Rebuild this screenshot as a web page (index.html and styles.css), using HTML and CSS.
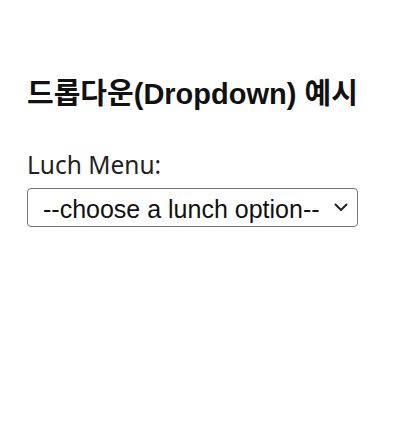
FILE: index.html
```html
<!DOCTYPE html>
<html lang="ko">
<head>
<meta charset="utf-8">
<title>Dropdown</title>
<link rel="stylesheet" href="styles.css">
</head>
<body>
<main class="page">
  <h1 class="title">드롭다운(Dropdown) 예시</h1>
  <label class="label" for="lunch">Luch Menu:</label>
  <div class="select-wrap">
    <select id="lunch" class="select">
      <option>--choose a lunch option--</option>
    </select>
    <svg class="chev" width="14" height="9" viewBox="0 0 14 9"><path d="M1.5 1.5 L7 7 L12.5 1.5" fill="none" stroke="#222" stroke-width="2" stroke-linecap="round" stroke-linejoin="round"/></svg>
  </div>
</main>
</body>
</html>
```

FILE: styles.css
```css
html, body {
  margin: 0;
  background: #ffffff;
}
.page {
  padding: 76px 0 0 27px;
  display: flex;
  flex-direction: column;
  align-items: flex-start;
  font-family: "Noto Sans", "Noto Sans CJK KR", sans-serif;
  color: #111;
}
.title {
  margin: 0;
  font-family: "Liberation Sans", "Noto Sans CJK KR", sans-serif;
  font-size: 29px;
  font-weight: bold;
  line-height: 36px;
}
.label {
  margin-top: 38px;
  font-size: 24.5px;
  line-height: 30px;
  color: #222;
}
.select-wrap {
  position: relative;
  margin-top: 8px;
}
.select {
  appearance: none;
  -webkit-appearance: none;
  width: 331px;
  height: 39px;
  box-sizing: border-box;
  border: 1px solid #767676;
  border-radius: 4px;
  background: #fff;
  font-family: "Liberation Sans", sans-serif;
  font-size: 25px;
  color: #111;
  padding: 2px 0 0 15px;
}
.chev {
  position: absolute;
  right: 10px;
  top: 15px;
  pointer-events: none;
}
```
